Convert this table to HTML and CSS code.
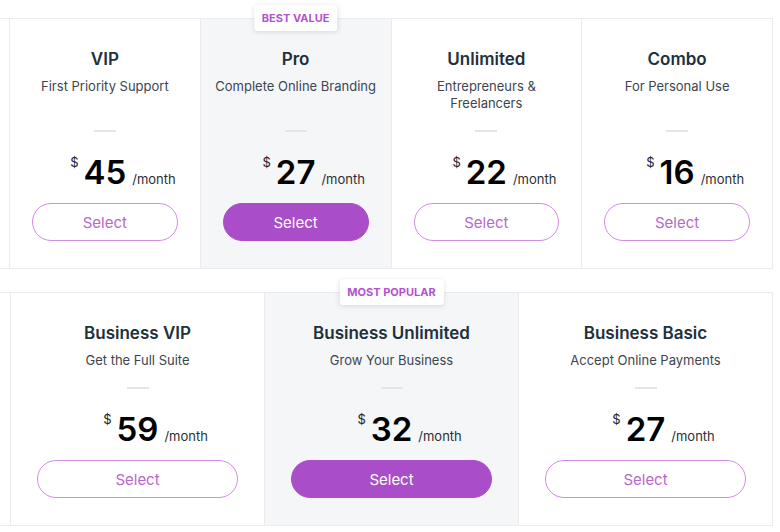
FILE: index.html
```html
<!DOCTYPE html>
<html>
<head>
<meta charset="utf-8">
<title>Plans</title>
<link rel="stylesheet" href="styles.css">
</head>
<body>

<div class="row row-four">
  <div class="plan">
    <h3>VIP</h3>
    <p class="tagline">First Priority Support</p>
    <hr class="dash">
    <div class="price"><span class="cur">$</span><span class="amount">45</span><span class="per">/month</span></div>
    <button class="select">Select</button>
  </div>
  <div class="plan featured">
    <span class="badge">BEST VALUE</span>
    <h3>Pro</h3>
    <p class="tagline">Complete Online Branding</p>
    <hr class="dash">
    <div class="price"><span class="cur">$</span><span class="amount">27</span><span class="per">/month</span></div>
    <button class="select">Select</button>
  </div>
  <div class="plan">
    <h3>Unlimited</h3>
    <p class="tagline">Entrepreneurs &amp;<br>Freelancers</p>
    <hr class="dash">
    <div class="price"><span class="cur">$</span><span class="amount">22</span><span class="per">/month</span></div>
    <button class="select">Select</button>
  </div>
  <div class="plan">
    <h3>Combo</h3>
    <p class="tagline">For Personal Use</p>
    <hr class="dash">
    <div class="price"><span class="cur">$</span><span class="amount">16</span><span class="per">/month</span></div>
    <button class="select">Select</button>
  </div>
</div>

<div class="row row-three">
  <div class="plan">
    <h3>Business VIP</h3>
    <p class="tagline">Get the Full Suite</p>
    <hr class="dash">
    <div class="price"><span class="cur">$</span><span class="amount">59</span><span class="per">/month</span></div>
    <button class="select">Select</button>
  </div>
  <div class="plan featured">
    <span class="badge">MOST POPULAR</span>
    <h3>Business Unlimited</h3>
    <p class="tagline">Grow Your Business</p>
    <hr class="dash">
    <div class="price"><span class="cur">$</span><span class="amount">32</span><span class="per">/month</span></div>
    <button class="select">Select</button>
  </div>
  <div class="plan">
    <h3>Business Basic</h3>
    <p class="tagline">Accept Online Payments</p>
    <hr class="dash">
    <div class="price"><span class="cur">$</span><span class="amount">27</span><span class="per">/month</span></div>
    <button class="select">Select</button>
  </div>
</div>

</body>
</html>
```

FILE: styles.css
```css
body {
   margin: 0;
   background-color: white;
   font-family: Inter, "Open Sans", sans-serif;
   color: #20303c;
}

.row {
   display: flex;
   width: 764px;
   padding-left: 9px;
   border-top: 1px solid #e9ebef;
   border-bottom: 1px solid #e9ebef;
}

.row-four {
   margin-top: 18px;
}

.row-three {
   margin-top: 23px;
   padding-left: 10px;
   width: 763px;
}

.plan {
   position: relative;
   flex: 1;
   display: flex;
   flex-direction: column;
   align-items: center;
   border-left: 1px solid #e9ebef;
   padding: 29px 22px 27px;
}

.row-three .plan {
   padding-left: 26px;
   padding-right: 26px;
}

.plan:last-child {
   border-right: 1px solid #e9ebef;
}

.featured {
   background-color: #f5f6f8;
}

.badge {
   position: absolute;
   top: -14px;
   left: 50%;
   transform: translateX(-50%);
   background: white;
   padding: 6px 8px;
   border-radius: 3px;
   box-shadow: 0 1px 5px rgba(0, 0, 0, 0.12);
   font-size: 11px;
   line-height: 14px;
   font-weight: 700;
   color: #b551d0;
   white-space: nowrap;
}

h3 {
   margin: 0;
   font-size: 17px;
   line-height: 22px;
   font-weight: 600;
}

.tagline {
   margin: 8px -10px 0;
   font-size: 13px;
   line-height: 17px;
   color: #3c4650;
   text-align: center;
   white-space: nowrap;
}

.row-four .tagline {
   min-height: 34px;
}

.dash {
   width: 22px;
   height: 0;
   margin: 18px 0 0;
   border: none;
   border-top: 2px solid #e2e5ea;
}

/* amount stays centred, $ and /month hang off its sides */
.price {
   display: grid;
   grid-template-columns: 1fr auto 1fr;
   align-items: baseline;
   width: 100%;
   margin-top: 22px;
   color: #000;
}

.cur {
   justify-self: end;
   align-self: start;
   font-size: 13px;
   line-height: 16px;
   margin-right: 5px;
   color: #222;
}

.amount {
   font-size: 33px;
   line-height: 36px;
   font-weight: 600;
}

.per {
   justify-self: start;
   margin-left: 6px;
   font-size: 13px;
   color: #2b2f33;
}

.select {
   margin-top: 13px;
   width: 100%;
   height: 38px;
   border: 1px solid #cf8ee0;
   border-radius: 19px;
   background: white;
   font-family: inherit;
   font-size: 15px;
   color: #b767cf;
}

.featured .select {
   background: #a94ec8;
   border-color: #a94ec8;
   color: white;
}
```
